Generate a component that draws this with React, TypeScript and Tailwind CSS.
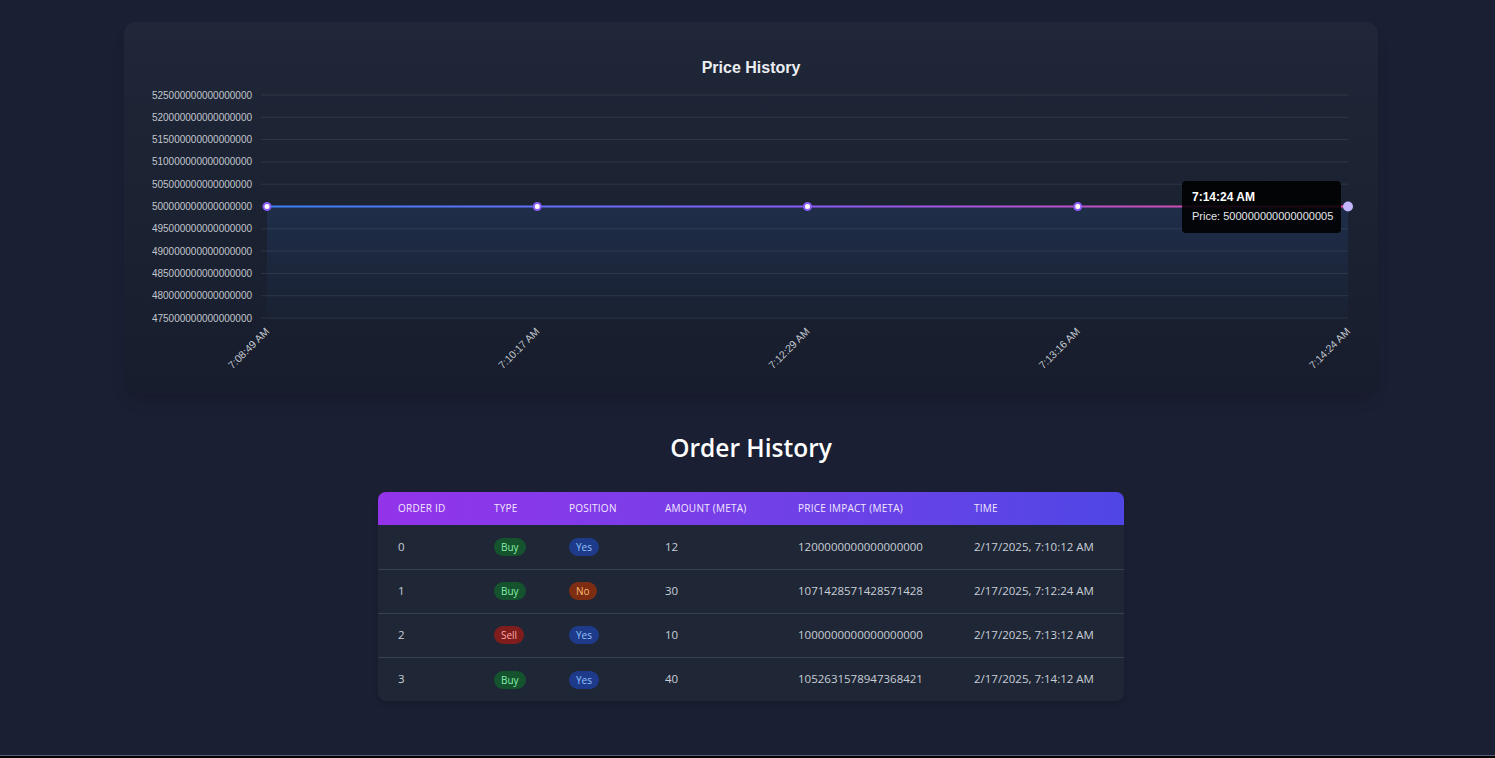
import React from 'react';

interface Order {
  id: number;
  type: 'Buy' | 'Sell';
  position: 'Yes' | 'No';
  amount: string;
  impact: string;
  time: string;
}

const orders: Order[] = [
  { id: 0, type: 'Buy', position: 'Yes', amount: '12', impact: '1200000000000000000', time: '2/17/2025, 7:10:12 AM' },
  { id: 1, type: 'Buy', position: 'No', amount: '30', impact: '1071428571428571428', time: '2/17/2025, 7:12:24 AM' },
  { id: 2, type: 'Sell', position: 'Yes', amount: '10', impact: '1000000000000000000', time: '2/17/2025, 7:13:12 AM' },
  { id: 3, type: 'Buy', position: 'Yes', amount: '40', impact: '1052631578947368421', time: '2/17/2025, 7:14:12 AM' },
];

const yTicks = [
  '525000000000000000',
  '520000000000000000',
  '515000000000000000',
  '510000000000000000',
  '505000000000000000',
  '500000000000000000',
  '495000000000000000',
  '490000000000000000',
  '485000000000000000',
  '480000000000000000',
  '475000000000000000',
];

const xTicks = ['7:08:49 AM', '7:10:17 AM', '7:12:29 AM', '7:13:16 AM', '7:14:24 AM'];

const PLOT_LEFT = 143;
const PLOT_RIGHT = 1224;
const PLOT_TOP = 73;
const STEP = 22.3;

const PriceChart: React.FC = () => {
  const xs = xTicks.map((_, i) => PLOT_LEFT + ((PLOT_RIGHT - PLOT_LEFT) / 4) * i);
  const lineY = PLOT_TOP + STEP * 5;
  const bottom = PLOT_TOP + STEP * 10;

  return (
    <svg width="1254" height="372" className="block" style={{ fontFamily: '"Liberation Sans", Arial, sans-serif' }}>
      <defs>
        <linearGradient id="lineGrad" gradientUnits="userSpaceOnUse" x1={PLOT_LEFT} x2={PLOT_RIGHT} y1="0" y2="0">
          <stop offset="0%" stopColor="#3b82f6" />
          <stop offset="50%" stopColor="#8b5cf6" />
          <stop offset="100%" stopColor="#ec4899" />
        </linearGradient>
        <linearGradient id="fillGrad" gradientUnits="userSpaceOnUse" x1="0" x2="0" y1={lineY} y2={bottom}>
          <stop offset="0%" stopColor="#3b82f6" stopOpacity="0.12" />
          <stop offset="100%" stopColor="#3b82f6" stopOpacity="0.02" />
        </linearGradient>
      </defs>

      <text x="627" y="51" textAnchor="middle" fill="#eceef2" fontSize="16" fontWeight="700">
        Price History
      </text>

      {/* grid + y labels */}
      {yTicks.map((t, i) => {
        const y = PLOT_TOP + STEP * i;
        return (
          <g key={t}>
            <line x1={PLOT_LEFT - 6} x2={PLOT_RIGHT} y1={y} y2={y} stroke="#ffffff" strokeOpacity="0.09" />
            <text x="128" y={y + 3.5} textAnchor="end" fill="#c2c6cd" fontSize="10">
              {t}
            </text>
          </g>
        );
      })}

      <rect x={PLOT_LEFT} y={lineY} width={PLOT_RIGHT - PLOT_LEFT} height={bottom - lineY} fill="url(#fillGrad)" />
      <line x1={PLOT_LEFT} x2={PLOT_RIGHT} y1={lineY} y2={lineY} stroke="url(#lineGrad)" strokeWidth="2" />

      {xs.map((x, i) =>
        i === xs.length - 1 ? (
          <circle key={i} cx={x} cy={lineY} r="5" fill="#c4b5fd" />
        ) : (
          <circle key={i} cx={x} cy={lineY} r="3.5" fill="#ffffff" stroke="#8b5cf6" strokeWidth="2" />
        )
      )}

      {xTicks.map((t, i) => (
        <text
          key={t}
          transform={`translate(${xs[i] + 3}, 310) rotate(-45)`}
          textAnchor="end"
          fill="#c2c6cd"
          fontSize="10.5"
        >
          {t}
        </text>
      ))}

      {/* tooltip */}
      <rect x="1058" y="159" width="159" height="52" rx="4" fill="#000000" fillOpacity="0.88" />
      <text x="1068" y="179" fill="#ffffff" fontSize="12" fontWeight="700">
        7:14:24 AM
      </text>
      <text x="1068" y="198" fill="#e5e7eb" fontSize="11">
        Price: 500000000000000005
      </text>
    </svg>
  );
};

const typeBadge = (type: Order['type']) =>
  type === 'Buy' ? 'bg-[#14532d] text-[#86efac]' : 'bg-[#7f1d1d] text-[#fca5a5]';

const positionBadge = (pos: Order['position']) =>
  pos === 'Yes' ? 'bg-[#1e3a8a] text-[#93c5fd]' : 'bg-[#7c2d12] text-[#fdba74]';

const App: React.FC = () => {
  return (
    <div className="h-[758px] bg-black">
      <div
        className="h-[756px] bg-[#1a1f33] border-b border-[#56607e] pt-[22px] pl-[7px] flex flex-col items-center"
        style={{ fontFamily: '"Open Sans", "Noto Sans", sans-serif' }}
      >
        {/* Price History card */}
        <div className="w-[1254px] h-[372px] rounded-xl bg-gradient-to-b from-[#1f2738] to-[#171d2c] shadow-lg">
          <PriceChart />
        </div>

        {/* Order History */}
        <h2 className="mt-[36px] text-[24.5px] leading-[36px] font-semibold text-white">Order History</h2>

        <div className="mt-[26px] w-[746px] rounded-lg overflow-hidden bg-[#1f2737] shadow-md">
          <table className="w-full table-fixed border-collapse text-left">
            <colgroup>
              <col className="w-[96px]" />
              <col className="w-[75px]" />
              <col className="w-[96px]" />
              <col className="w-[133px]" />
              <col className="w-[176px]" />
              <col />
            </colgroup>
            <thead>
              <tr className="h-[33px] bg-gradient-to-r from-[#9333ea] to-[#4f46e5]">
                {['Order ID', 'Type', 'Position', 'Amount (META)', 'Price Impact (META)', 'Time'].map((h) => (
                  <th key={h} className="pl-5 text-[10px] font-medium uppercase tracking-wide text-[#f3e8ff]">
                    {h}
                  </th>
                ))}
              </tr>
            </thead>
            <tbody>
              {orders.map((o, i) => (
                <tr key={o.id} className={`h-[44px] ${i < orders.length - 1 ? 'border-b border-[#374151]' : ''}`}>
                  <td className="pl-5 align-middle text-[11.5px] leading-4 text-[#c9ced6]">{o.id}</td>
                  <td className="pl-5 align-middle leading-none">
                    <span className={`inline-flex h-[18px] items-center rounded-full px-[7px] align-middle text-[10px] ${typeBadge(o.type)}`}>
                      {o.type}
                    </span>
                  </td>
                  <td className="pl-5 align-middle leading-none">
                    <span className={`inline-flex h-[18px] items-center rounded-full px-[7px] align-middle text-[10px] ${positionBadge(o.position)}`}>
                      {o.position}
                    </span>
                  </td>
                  <td className="pl-5 align-middle text-[11.5px] leading-4 text-[#c9ced6]">{o.amount}</td>
                  <td className="pl-5 align-middle text-[11.5px] leading-4 text-[#c9ced6]">{o.impact}</td>
                  <td className="pl-5 align-middle text-[11.5px] leading-4 text-[#c9ced6]">{o.time}</td>
                </tr>
              ))}
            </tbody>
          </table>
        </div>
      </div>
    </div>
  );
};

export default App;
